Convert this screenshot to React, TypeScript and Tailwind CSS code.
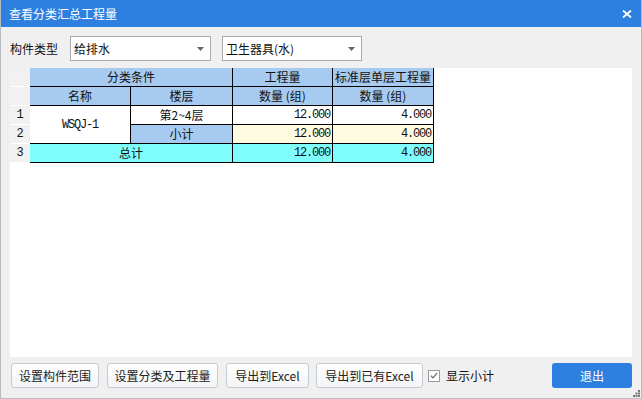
import React from "react";

const ui = { fontFamily: '"Noto Sans CJK SC", "Liberation Sans", sans-serif' };
const mono = { fontFamily: '"Liberation Mono", "Noto Sans CJK SC", monospace' };

function Combo({ text, w }: { text: string; w: string }) {
  return (
    <div className={`${w} h-[25px] bg-white border border-[#a9abb0] flex items-center justify-between pl-[3px] pr-[6px]`}>
      <span className="text-[12px] text-[#111] leading-none">{text}</span>
      <svg width="7" height="4" viewBox="0 0 7 4"><path d="M0 0h7L3.5 4z" fill="#666" /></svg>
    </div>
  );
}

function Btn({ text, w }: { text: string; w: string }) {
  return (
    <div className={`${w} h-[25px] rounded-[3px] border border-[#c5cad3] bg-gradient-to-b from-white to-[#f3f4f6] flex items-center justify-center text-[12px] leading-none text-[#222]`}>
      {text}
    </div>
  );
}

export default function App() {
  const hdr = "bg-[#a6caf0] flex items-center justify-center text-[12px] leading-none whitespace-nowrap text-[#111]";
  const num = "flex items-center justify-end pr-[2px] text-[12px] tracking-[-1.2px] leading-none text-[#111]";
  return (
    <div className="w-[642px] h-[399px] bg-[#f0f0f0] border-l border-r border-b border-[#b7bcc4] flex flex-col overflow-hidden" style={ui}>
      <div className="h-[27px] bg-[#2d7fe0] flex items-center justify-between pl-[8px] pr-[9px] text-white text-[12px] leading-none shrink-0">
        <span>查看分类汇总工程量</span>
        <svg width="10" height="8" viewBox="0 0 10 8"><path d="M1 0.5L9 7.5M9 0.5L1 7.5" stroke="white" strokeWidth="1.8" /></svg>
      </div>
      <div className="flex items-center mt-[9px] pl-[9px] h-[25px]">
        <span className="text-[12px] leading-none text-[#111] w-[60px]">构件类型</span>
        <Combo text="给排水" w="w-[141px]" />
        <div className="w-[11px]" />
        <Combo text="卫生器具(水)" w="w-[140px]" />
      </div>
      <div className="mt-[7px] ml-[9px] w-[622px] h-[289px] bg-white flex items-start">
        <div className="w-[20px] flex flex-col bg-white gap-px">
          {["", "", "1", "2", "3"].map((t, i) => (
            <div key={i} className="h-[18px] bg-[#f1f1f1] flex items-center justify-center text-[12px] leading-none text-[#111]" style={mono}>{t}</div>
          ))}
        </div>
        <div className="grid grid-cols-[100px_101px_99px_100px] grid-rows-[18px_18px_18px_18px_18px] gap-px bg-black border-r border-b border-black">
          <div className={`${hdr} col-span-2`}>分类条件</div>
          <div className={hdr}>工程量</div>
          <div className={hdr}>标准层单层工程量</div>
          <div className={hdr}>名称</div>
          <div className={hdr}>楼层</div>
          <div className={hdr}>数量 (组)</div>
          <div className={hdr}>数量 (组)</div>
          <div className="row-span-2 bg-white flex items-center justify-center text-[12px] tracking-[-1.2px] leading-none text-[#111]" style={mono}>WSQJ-1</div>
          <div className="bg-white flex items-center justify-center text-[12px] leading-none text-[#111]">第2~4层</div>
          <div className={`${num} bg-white`} style={mono}>12.000</div>
          <div className={`${num} bg-white`} style={mono}>4.000</div>
          <div className={hdr}>小计</div>
          <div className={`${num} bg-[#fffbe1]`} style={mono}>12.000</div>
          <div className={`${num} bg-[#fffbe1]`} style={mono}>4.000</div>
          <div className="col-span-2 bg-[#7ffdfd] flex items-center justify-center text-[12px] leading-none text-[#111]">总计</div>
          <div className={`${num} bg-[#7ffdfd]`} style={mono}>12.000</div>
          <div className={`${num} bg-[#7ffdfd]`} style={mono}>4.000</div>
        </div>
      </div>
      <div className="flex items-center mt-[6px] pl-[10px] h-[25px]">
        <Btn text="设置构件范围" w="w-[88px]" />
        <div className="w-[8px]" />
        <Btn text="设置分类及工程量" w="w-[111px]" />
        <div className="w-[8px]" />
        <Btn text="导出到Excel" w="w-[83px]" />
        <div className="w-[7px]" />
        <Btn text="导出到已有Excel" w="w-[107px]" />
        <div className="ml-[5px] w-[12px] h-[12px] border border-[#9a9a9a] bg-white flex items-center justify-center">
          <svg width="8" height="7" viewBox="0 0 8 7"><path d="M0.8 3.6L3 5.8L7.2 0.8" stroke="#666" strokeWidth="1.2" fill="none" /></svg>
        </div>
        <span className="ml-[6px] text-[12px] leading-none text-[#111]">显示小计</span>
        <div className="ml-auto mr-[9px] w-[80px] h-[25px] rounded-[3px] bg-[#2d7fe0] text-white text-[12px] leading-none flex items-center justify-center">退出</div>
      </div>
      <div className="flex-1 relative">
        <svg className="absolute right-[1px] bottom-[1px]" width="7" height="7" viewBox="0 0 7 7">
          <rect x="5" y="0" width="2" height="2" fill="#777" />
          <rect x="2.5" y="2.5" width="2" height="2" fill="#777" />
          <rect x="5" y="2.5" width="2" height="2" fill="#777" />
          <rect x="0" y="5" width="2" height="2" fill="#777" />
          <rect x="2.5" y="5" width="2" height="2" fill="#777" />
          <rect x="5" y="5" width="2" height="2" fill="#777" />
        </svg>
      </div>
    </div>
  );
}
